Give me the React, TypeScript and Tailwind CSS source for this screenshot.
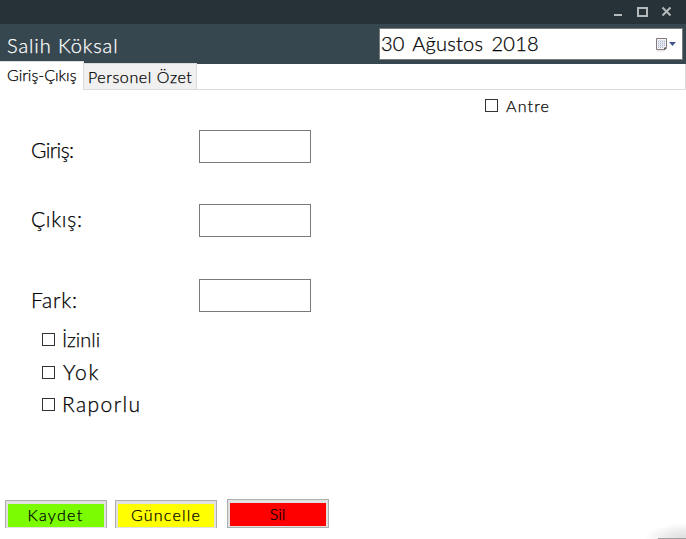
import React from 'react';

function Check({ label, className, text }: { label: string; className: string; text: string }) {
  return (
    <label className={`flex items-start ${className}`}>
      <span className="mt-[6px] block h-[13px] w-[13px] shrink-0 border border-[#333] bg-white" />
      <span className={`whitespace-nowrap ${text}`}>{label}</span>
    </label>
  );
}

function Field({ label, className, text }: { label: string; className: string; text: string }) {
  return (
    <div className={`flex items-start pl-[31px] ${className}`}>
      <span className={`w-[168px] shrink-0 whitespace-nowrap text-[21px] leading-[25px] ${text}`}>{label}</span>
      <div className="h-[33px] w-[112px] border border-[#7a7a7a] bg-white" />
    </div>
  );
}

export default function App() {
  return (
    <div className="flex h-[539px] w-[686px] flex-col overflow-hidden bg-white font-['Lato',sans-serif] font-light text-black [-webkit-text-stroke:0.25px]">
      <div className="flex h-[24px] shrink-0 justify-end bg-[#263238] pr-[14px]">
        <svg width="60" height="24" viewBox="0 0 60 24" fill="none" stroke="#b4b9bb" shapeRendering="crispEdges">
          <path d="M2 15H10" strokeWidth="2" />
          <path d="M25 8H36M25 15.5H36" strokeWidth="2" />
          <path d="M26 7V16M35 7V16" strokeWidth="1.5" />
          <path d="M50.5 7.5L58.5 15.5M58.5 7.5L50.5 15.5" strokeWidth="2" shapeRendering="auto" />
        </svg>
      </div>
      <header className="flex h-[40px] shrink-0 items-start justify-between bg-[#37474f] pr-[3px] pl-[7px]">
        <h1 className="mt-[9px] text-[20px] leading-[24px] font-light tracking-[0.9px] whitespace-nowrap text-white">Salih Köksal</h1>
        <div className="mt-[4px] flex h-[32px] w-[304px] items-start justify-between border border-[#7a7a7a] bg-white pr-[5px] pl-px">
          <span className="mt-[2px] text-[20px] leading-[24px] tracking-[0.25px] whitespace-nowrap [word-spacing:2.5px]">30 Ağustos 2018</span>
          <svg className="mt-[8px]" width="22" height="16" viewBox="0 0 22 16">
            <path d="M1.5 1.5H11.5V10L9 12.5H1.5Z" fill="#f4f4f8" stroke="#85787a" />
            <path d="M9 13V10.5H12V11L10 13Z" fill="#6a5f60" />
            <path d="M3 4.5H10M3 6.5H10M3 8.5H10M3 10.5H8" stroke="#a9b5cd" strokeDasharray="1 1" />
            <path d="M3 3.5H10M3 5.5H10M3 7.5H10M3 9.5H9" stroke="#dde2ec" />
            <path d="M2 14H10" stroke="#ddd" />
            <path d="M14 5H21L17.5 9Z" fill="#41598a" />
          </svg>
        </div>
      </header>
      <nav className="relative -mt-[3px] flex h-[29px] shrink-0 items-end text-[16px] leading-[19px]">
        <div className="h-[29px] w-[84px] border-t border-r border-[#dcdcdc] bg-white pt-[3px] pl-[7px] whitespace-nowrap">Giriş-Çıkış</div>
        <div className="h-[27px] w-[113px] border-t border-r border-b border-[#dcdcdc] bg-[#f0f0f0] pt-[3px] pl-[4px] tracking-[0.6px] whitespace-nowrap">Personel Özet</div>
        <div className="h-[26px] flex-1 border-r border-b border-[#dcdcdc]" />
      </nav>
      <main className="flex flex-1 flex-col">
        <Check label="Antre" className="mt-[3px] h-[37px] pl-[485px]" text="mt-[3px] ml-[8px] text-[16px] leading-[19px] tracking-[1.2px]" />
        <Field label="Giriş:" className="h-[74px]" text="mt-[7px] tracking-[-0.6px]" />
        <Field label="Çıkış:" className="h-[75px]" text="mt-[2px] tracking-[0.7px]" />
        <Field label="Fark:" className="h-[48px]" text="mt-[8px] tracking-[0.8px]" />
        <Check label="İzinli" className="h-[33px] pl-[42px]" text="ml-[7px] text-[20px] leading-[24px]" />
        <Check label="Yok" className="h-[32px] pl-[42px]" text="-mt-px ml-[8px] text-[21px] leading-[25px] tracking-[1.8px]" />
        <Check label="Raporlu" className="h-[32px] pl-[42px]" text="-mt-px ml-[7px] text-[21px] leading-[25px] tracking-[1.4px]" />
        <div className="mt-auto flex h-[40px] items-start pl-[5px] text-[16px] leading-[19px]">
          <button className="mt-px mr-[8px] h-[28px] w-[102px] border border-b-0 border-[#adadad] bg-[#e1e1e1] px-[2px] pt-[2px]">
            <span className="block h-[23px] bg-[#7cfc00] pt-px pr-px tracking-[1.3px]">Kaydet</span>
          </button>
          <button className="mt-px mr-[10px] h-[28px] w-[102px] border border-b-0 border-[#adadad] bg-[#e1e1e1] px-[2px] pt-[2px]">
            <span className="block h-[23px] bg-[#ffff00] pt-px tracking-[1.2px]">Güncelle</span>
          </button>
          <button className="h-[29px] w-[102px] border border-[#adadad] bg-[#e1e1e1] px-[2px] pt-[2px]">
            <span className="block h-[23px] bg-[#ff0000] pt-px pr-px">Sil</span>
          </button>
          <div className="mt-[24px] ml-auto flex h-[16px] w-[42px] flex-col items-end justify-end bg-[radial-gradient(ellipse_at_bottom_right,#dcdcdc_0%,#eeeeee_40%,#ffffff_70%)]">
            <div className="h-px w-[28px] bg-[#a0a0a0]" />
          </div>
        </div>
      </main>
    </div>
  );
}
